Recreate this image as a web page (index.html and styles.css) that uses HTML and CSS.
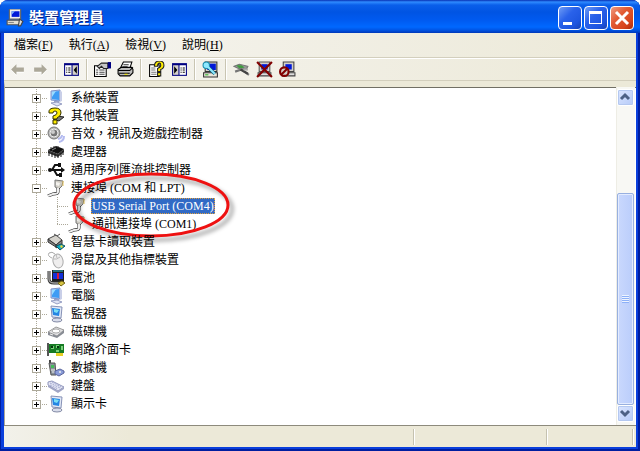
FILE: index.html
```html
<!DOCTYPE html>
<html lang="zh-Hant">
<head>
  <meta charset="UTF-8">
  <meta name="viewport" content="width=device-width, initial-scale=1.0">
  <title>裝置管理員</title>
  <link rel="stylesheet" href="styles.css">
</head>
<body>
  <!-- icon shapes, used below by id -->
  <svg class="sprite" aria-hidden="true">
    <symbol id="i-pc" viewBox="0 0 16 16">
      <path d="M3 0h10v9H3z" fill="#eee" stroke="#666" stroke-width="1"/>
      <path d="M5 2h7v5H5z" fill="#0018d8"/>
      <path d="M5 2h3l-3 3z" fill="#7ab0ff"/>
      <path d="M1 10h12v4H1z" fill="#e4e0d4" stroke="#555"/>
      <path d="M2 12h5" stroke="#888"/>
      <path d="M12 9l3 2-2 4h-2z" fill="#ddd" stroke="#444"/>
    </symbol>
    <symbol id="i-monitor" viewBox="0 0 18 18">
      <path d="M4 2l9-1v11l-9-1z" fill="#a9c9f5" stroke="#7f93c8"/>
      <path d="M5 3l7-1v9l-7-1z" fill="#3e9cf4"/>
      <path d="M5 3l4-1-4 6z" fill="#9bdcff"/>
      <path d="M13 1l2 2v9l-2 1z" fill="#c9cfe8"/>
      <path d="M7 12h5v2H7z" fill="#9aa2c8"/>
      <path d="M4 14l6-1 5 2-5 2z" fill="#dfe3f4" stroke="#98a0c4"/>
    </symbol>
    <symbol id="i-screen" viewBox="0 0 18 18">
      <path d="M4 1l11 1-1 11-9-1z" fill="#e2e8f6" stroke="#8792b6"/>
      <path d="M5 3l8 1-1 7-6-1z" fill="#2486e4"/>
      <path d="M7 4l5 1-2 3-3-1z" fill="#7be0f4"/>
      <path d="M8 12h3v2H8z" fill="#8892b4"/>
      <ellipse cx="10" cy="15" rx="5" ry="2" fill="#d9ddeb" stroke="#848ba6"/>
    </symbol>
    <symbol id="i-question" viewBox="0 0 18 18">
      <path d="M10 9l7 1-5 4-6-2z" fill="#777" stroke="#222"/>
      <path d="M2 6q-1-5 6-5q6 0 6 5q0 3-4 5v1H6V9q4-1 4-3q0-2-2-2q-2 0-2 2zM6 13h4v4H6z" fill="#ffee00" stroke="#332f00"/>
    </symbol>
    <symbol id="i-sound" viewBox="0 0 18 18">
      <circle cx="7" cy="8" r="6" fill="#b5b5b5" stroke="#777"/>
      <circle cx="7" cy="8" r="4" fill="#777" stroke="#eee"/>
      <circle cx="6" cy="7" r="2" fill="#ccc"/>
      <path d="M11 14q4-1 4-4M12 17q5-1 5-6" fill="none" stroke="#b4bbf0" stroke-width="2"/>
    </symbol>
    <symbol id="i-chip" viewBox="0 0 18 18">
      <path d="M1 7l8-4 8 3-6 5z" fill="#111"/>
      <path d="M1 7v3l10 4 6-5V6l-6 5z" fill="#333"/>
      <path d="M2 9v4M5 10v4M8 11v4M11 12v3M14 10v4M16 8v4" stroke="#111"/>
      <path d="M4 4v2M7 3v2M11 3v2" stroke="#333"/>
      <path d="M5 7l4-2" stroke="#888"/>
    </symbol>
    <symbol id="i-usb" viewBox="0 0 18 18">
      <path d="M2 9h14M5 9l3-5h4M7 9l3 5h3" fill="none" stroke="#111" stroke-width="2"/>
      <circle cx="3" cy="9" r="2" fill="#111"/>
      <path d="M14 6l4 3-4 3z" fill="#111"/>
      <path d="M11 2h3v4h-3zM12 12h3v4h-3z" fill="#111"/>
    </symbol>
    <symbol id="i-plug" viewBox="0 0 18 18">
      <path d="M8 1l8 1-1 5-3 3-4-2z" fill="#cfccc4" stroke="#777"/>
      <path d="M9 3l4 1-1 3-3-1z" fill="#f4f2ee"/>
      <path d="M16 2v5" stroke="#ebc75a"/>
      <path d="M11 9v4q0 2-5 2l-5 2" fill="none" stroke="#222" stroke-width="3"/>
      <path d="M11 9v4q0 2-5 2l-5 2" fill="none" stroke="#eee" stroke-width="2"/>
    </symbol>
    <symbol id="i-card" viewBox="0 0 18 18">
      <path d="M1 6l8-4 6 5-6 5z" fill="#d5d3cd" stroke="#444"/>
      <path d="M1 6v3l8 5v-2zM9 12l6-5v4l-6 4z" fill="#888" stroke="#333"/>
      <path d="M7 1l3 2 3-2" fill="none" stroke="#555"/>
      <path d="M9 13l5-2 4 2-5 4z" fill="#0eabc0" stroke="#164f5c"/>
      <path d="M14 12l2 1-1 2-2-1z" fill="#f2d738"/>
    </symbol>
    <symbol id="i-mouse" viewBox="0 0 18 18">
      <path d="M5 7Q0 5 2 2q3-2 6 1" fill="none" stroke="#aaa"/>
      <ellipse cx="11" cy="10" rx="5" ry="7" fill="#efeeee" stroke="#aaa" transform="rotate(-12 11 10)"/>
      <path d="M6 8q4 1 7-2M9 3l1 4" fill="none" stroke="#bbb"/>
    </symbol>
    <symbol id="i-battery" viewBox="0 0 18 18">
      <path d="M5 1h12v13H5z" fill="#202020"/>
      <path d="M6 4h10v6H6z" fill="#1230d8"/>
      <path d="M10 4h2v6h-2z" fill="#d31d3a"/>
      <path d="M6 2h10" stroke="#2bc4dc"/>
      <path d="M2 2v8q0 4 5 4h6" fill="none" stroke="#333" stroke-width="3"/>
      <path d="M2 2v8q0 4 5 4h6" fill="none" stroke="#ccc"/>
      <path d="M11 14l4-2 3 2-4 3z" fill="#d6c443" stroke="#776919"/>
    </symbol>
    <symbol id="i-disk" viewBox="0 0 18 18">
      <path d="M1 9l8-5 8 3-7 6z" fill="#e3e3e5" stroke="#999"/>
      <path d="M1 9v3l9 3 7-5V7l-7 6z" fill="#888c94"/>
      <ellipse cx="9" cy="8" rx="4" ry="2" fill="#fff" stroke="#aaa"/>
      <path d="M3 11l3 1" stroke="#eee"/>
    </symbol>
    <symbol id="i-nic" viewBox="0 0 18 18">
      <path d="M1 3h16v9H1z" fill="#167a24"/>
      <path d="M1 2v13" stroke="#555" stroke-width="2"/>
      <path d="M4 5h3v3H4zM9 4h3v3H9zM14 5h2v4h-2zM9 9h3v2H9z" fill="#79d07a"/>
      <path d="M4 5h2v2H4zM10 5h2v2h-2z" fill="#06330e"/>
      <path d="M9 12h7v3H9z" fill="#e8cf24"/>
    </symbol>
    <symbol id="i-modem" viewBox="0 0 18 18">
      <path d="M3 1v4" stroke="#444" stroke-width="2"/>
      <path d="M2 4h6l1 12H4z" fill="#8b949c" stroke="#555"/>
      <path d="M4 6h3v3H4z" fill="#43bd59"/>
      <path d="M4 11h4M5 13h4" stroke="#eee"/>
      <path d="M8 12l5-2 4 2v2l-5 3-4-2z" fill="#8a9cd8" stroke="#5b659c"/>
      <circle cx="13" cy="13" r="1" fill="#eee"/>
    </symbol>
    <symbol id="i-keyboard" viewBox="0 0 18 18">
      <path d="M1 5l4-1 12 6-6 4L1 8z" fill="#e3e5f4" stroke="#9096bc"/>
      <path d="M3 6l10 5M5 5l9 5M3 8l8 4" stroke="#a3aacf" stroke-dasharray="2 1"/>
      <path d="M11 14l6-4v2l-6 4L1 10V8z" fill="#a0a5c5"/>
    </symbol>

    <symbol id="t-back" viewBox="0 0 16 16">
      <path d="M2 9l5-5v3h7v4H7v3z" fill="#fff"/>
      <path d="M2 8l5-5v3h7v4H7v3z" fill="#aca899"/>
    </symbol>
    <symbol id="t-next" viewBox="0 0 16 16">
      <path d="M14 9L9 4v3H2v4h7v3z" fill="#fff"/>
      <path d="M14 8L9 3v3H2v4h7v3z" fill="#aca899"/>
    </symbol>
    <symbol id="t-tree" viewBox="0 0 16 16">
      <path d="M1 2h14v12H1z" fill="#000080"/>
      <path d="M2 4h6v9H2z" fill="#fff"/>
      <path d="M9 4h5v9H9z" fill="#d4d0c8"/>
      <path d="M3 6h1v1H3zM5 6h2v1H5zM3 8h1v1H3zM5 8h2v1H5zM3 10h1v1H3zM5 10h2v1H5zM13 5v7l-3-3.500z" fill="#000"/>
    </symbol>
    <symbol id="t-pane" viewBox="0 0 16 16">
      <path d="M1 2h14v12H1z" fill="#000080"/>
      <path d="M8 4h6v9H8z" fill="#fff"/>
      <path d="M2 4h5v9H2z" fill="#d4d0c8"/>
      <path d="M9 6h1v1H9zM11 6h2v1h-2zM9 8h1v1H9zM11 8h2v1h-2zM9 10h1v1H9zM11 10h2v1h-2zM3 5v7l3-3.500z" fill="#000"/>
    </symbol>
    <symbol id="t-props" viewBox="0 0 16 16">
      <path d="M.5 4.500h11v10H.5z" fill="#fff" stroke="#000"/>
      <path d="M2 8.500h2M5 8.500h5M2 10.500h2M5 10.500h5M2 12.500h2M5 12.500h5" stroke="#444"/>
      <path d="M3 5l4-3h6v5H9L7 5 5 7z" fill="#c5c5c5" stroke="#222"/>
      <path d="M13 1h3v6h-3z" fill="#000080"/>
    </symbol>
    <symbol id="t-print" viewBox="0 0 16 16">
      <path d="M6 1h8l-2 6H3z" fill="#fff" stroke="#000"/>
      <path d="M6 3.500h5M5 5.500h5" stroke="#333"/>
      <path d="M1 8l3-2h10l1 2v3l-3 3H3l-2-2z" fill="#bbb" stroke="#000"/>
      <path d="M1 9h11l3-3M2 11.500h10" fill="none" stroke="#000"/>
      <path d="M7 12h3v1H7z" fill="#f2e600"/>
    </symbol>
    <symbol id="t-help" viewBox="0 0 16 16">
      <path d="M1.500 3.500h9v11h-9z" fill="#fff" stroke="#000"/>
      <path d="M3 6.500h4M3 8.500h4M3 10.500h5M3 12.500h5" stroke="#777"/>
      <path d="M6 5q0-5 5-5q4 0 4 4q0 3-3 4v2H9V7q3-1 3-3q0-2-1-2q-2 0-2 3zM9 11h3v3H9z" fill="#ffee00" stroke="#222"/>
    </symbol>
    <symbol id="t-scan" viewBox="0 0 16 16">
      <path d="M3 1h11v9H3z" fill="#d4d0c8" stroke="#333"/>
      <path d="M5 2.500h8v6H5z" fill="#0018d8"/>
      <path d="M1.500 11h13v4h-13z" fill="#e9e6da" stroke="#333"/>
      <path d="M3 13h3" stroke="#29b529"/>
      <path d="M5 5l7 7" stroke="#055a78" stroke-width="3"/>
      <circle cx="4" cy="4" r="3" fill="#8feaff" stroke="#178cae"/>
      <path d="M5 5l7 7" stroke="#8feaff" stroke-width="2"/>
    </symbol>
    <symbol id="t-update" viewBox="0 0 16 16">
      <path d="M1 5l5-2 8 2-1 2-6 1z" fill="#999" stroke="#777"/>
      <path d="M3 4l5 0 3 2-5 1z" fill="#3f9b3f"/>
      <path d="M2 10l6-2 7 5" fill="none" stroke="#777" stroke-width="2"/>
      <path d="M7 8l7 4" stroke="#444" stroke-width="2"/>
      <path d="M10 8h4" stroke="#aaa" stroke-width="2"/>
    </symbol>
    <symbol id="t-remove" viewBox="0 0 16 16">
      <path d="M3 1h10v9H3z" fill="#d4d0c8" stroke="#555"/>
      <path d="M5 3h6v5H5z" fill="#0018d8"/>
      <path d="M2 11h12v3H2z" fill="#ddd" stroke="#444"/>
      <path d="M1 1l14 14M15 1L1 15" stroke="#800000" stroke-width="2"/>
    </symbol>
    <symbol id="t-disable" viewBox="0 0 16 16">
      <path d="M4 1h10v9H4z" fill="#d4d0c8" stroke="#444"/>
      <path d="M6 3h6v5H6z" fill="#0018d8"/>
      <path d="M3 11h12v3H3z" fill="#ddd" stroke="#444"/>
      <circle cx="5" cy="10" r="4" fill="#d4d0c8" stroke="#800000" stroke-width="2"/>
      <path d="M2 13l6-6" stroke="#800000" stroke-width="2"/>
    </symbol>
  </svg>

  <div class="window">
    <header class="titlebar">
      <svg class="app-icon"><use href="#i-pc"/></svg>
      <h1>裝置管理員</h1>
      <div class="controls">
        <button class="ctl" aria-label="最小化"><svg viewBox="0 0 22 22"><path d="M4 15h9v3H4z" fill="#fff"/></svg></button>
        <button class="ctl" aria-label="最大化"><svg viewBox="0 0 22 22"><path d="M4 4h13v13H4zM5 7v9h11V7z" fill="#fff" fill-rule="evenodd"/></svg></button>
        <button class="ctl close" aria-label="關閉"><svg viewBox="0 0 22 22"><path d="M5 5l12 12M17 5L5 17" stroke="#fff" stroke-width="3"/></svg></button>
      </div>
    </header>

    <nav class="menubar">
      <button>檔案(<u>F</u>)</button>
      <button>執行(<u>A</u>)</button>
      <button>檢視(<u>V</u>)</button>
      <button>說明(<u>H</u>)</button>
    </nav>

    <div class="toolbar">
      <button aria-label="上一頁" disabled><svg><use href="#t-back"/></svg></button>
      <button aria-label="下一頁" disabled><svg><use href="#t-next"/></svg></button>
      <span class="sep"></span>
      <button aria-label="顯示主控台樹狀目錄"><svg><use href="#t-tree"/></svg></button>
      <span class="sep"></span>
      <button aria-label="內容"><svg><use href="#t-props"/></svg></button>
      <button aria-label="列印"><svg><use href="#t-print"/></svg></button>
      <span class="sep"></span>
      <button aria-label="說明"><svg><use href="#t-help"/></svg></button>
      <button aria-label="動作窗格"><svg><use href="#t-pane"/></svg></button>
      <span class="sep"></span>
      <button aria-label="掃描硬體變更"><svg><use href="#t-scan"/></svg></button>
      <span class="sep"></span>
      <button aria-label="更新驅動程式"><svg><use href="#t-update"/></svg></button>
      <button aria-label="解除安裝"><svg><use href="#t-remove"/></svg></button>
      <button aria-label="停用"><svg><use href="#t-disable"/></svg></button>
    </div>

    <main class="content">
      <ul class="tree">
        <li><div class="row"><button class="toggle plus" aria-label="展開"></button><svg><use href="#i-monitor"/></svg><span>系統裝置</span></div></li>
        <li><div class="row"><button class="toggle plus" aria-label="展開"></button><svg><use href="#i-question"/></svg><span>其他裝置</span></div></li>
        <li><div class="row"><button class="toggle plus" aria-label="展開"></button><svg><use href="#i-sound"/></svg><span>音效，視訊及遊戲控制器</span></div></li>
        <li><div class="row"><button class="toggle plus" aria-label="展開"></button><svg><use href="#i-chip"/></svg><span>處理器</span></div></li>
        <li><div class="row"><button class="toggle plus" aria-label="展開"></button><svg><use href="#i-usb"/></svg><span>通用序列匯流排控制器</span></div></li>
        <li class="ports">
          <div class="row"><button class="toggle" aria-label="摺疊"></button><svg><use href="#i-plug"/></svg><span>連接埠 (COM 和 LPT)</span></div>
          <ul>
            <li class="row"><svg><use href="#i-plug"/></svg><span class="selected">USB Serial Port (COM4)</span></li>
            <li class="row"><svg><use href="#i-plug"/></svg><span>通訊連接埠 (COM1)</span></li>
          </ul>
          <svg class="marker" viewBox="0 0 166 76"><ellipse cx="81" cy="36" rx="77" ry="31"/></svg>
        </li>
        <li><div class="row"><button class="toggle plus" aria-label="展開"></button><svg><use href="#i-card"/></svg><span>智慧卡讀取裝置</span></div></li>
        <li><div class="row"><button class="toggle plus" aria-label="展開"></button><svg><use href="#i-mouse"/></svg><span>滑鼠及其他指標裝置</span></div></li>
        <li><div class="row"><button class="toggle plus" aria-label="展開"></button><svg><use href="#i-battery"/></svg><span>電池</span></div></li>
        <li><div class="row"><button class="toggle plus" aria-label="展開"></button><svg><use href="#i-monitor"/></svg><span>電腦</span></div></li>
        <li><div class="row"><button class="toggle plus" aria-label="展開"></button><svg><use href="#i-screen"/></svg><span>監視器</span></div></li>
        <li><div class="row"><button class="toggle plus" aria-label="展開"></button><svg><use href="#i-disk"/></svg><span>磁碟機</span></div></li>
        <li><div class="row"><button class="toggle plus" aria-label="展開"></button><svg><use href="#i-nic"/></svg><span>網路介面卡</span></div></li>
        <li><div class="row"><button class="toggle plus" aria-label="展開"></button><svg><use href="#i-modem"/></svg><span>數據機</span></div></li>
        <li><div class="row"><button class="toggle plus" aria-label="展開"></button><svg><use href="#i-keyboard"/></svg><span>鍵盤</span></div></li>
        <li><div class="row"><button class="toggle plus" aria-label="展開"></button><svg><use href="#i-screen"/></svg><span>顯示卡</span></div></li>
      </ul>
      <div class="scrollbar">
        <button aria-label="向上捲動"><svg viewBox="0 0 15 15"><path d="M3 9l4-4 4 4"/></svg></button>
        <div class="track"><div class="thumb"></div></div>
        <button aria-label="向下捲動"><svg viewBox="0 0 15 15"><path d="M3 5l4 4 4-4"/></svg></button>
      </div>
    </main>

    <footer class="statusbar">
      <span></span>
      <span></span>
      <span></span>
    </footer>
  </div>
</body>
</html>
```

FILE: styles.css
```css
* {
  box-sizing: border-box;
}

body {
  margin: 0;
  font-family: "Liberation Serif", "Noto Sans CJK TC", serif;
  font-size: 12px;
  color: #000;
  background: #fff;
}

button {
  padding: 0;
  border: none;
  background: none;
  font: inherit;
  color: inherit;
}

ul {
  margin: 0;
  padding: 0;
  list-style: none;
}

.sprite {
  display: none;
}

.window {
  display: flex;
  flex-direction: column;
  min-height: 100vh;
  padding: 0 4px 4px;
  background: #0a3fdc;
  border-radius: 8px 8px 0 0;
  box-shadow: inset 1px -2px #001ea0, inset -2px 0 #001ea0;
}

/* title bar */
.titlebar {
  display: flex;
  align-items: center;
  gap: 5px;
  height: 33px;
  margin: 0 -4px;
  padding: 3px 6px 0 6px;
  border-radius: 8px 8px 0 0;
  background: linear-gradient(#0831b4 0, #2f8bff 2px, #0a5fea 5px, #0054e3 12px, #005af0 20px, #0068ff 27px, #0055e5 30px, #0038b8 33px);
}

.app-icon {
  width: 18px;
  height: 18px;
}

.titlebar h1 {
  flex: 1;
  margin: 0;
  font-size: 15px;
  line-height: 20px;
  color: #fff;
  text-shadow: 1px 1px #0a1f7c;
}

.controls {
  display: flex;
  gap: 2px;
}

.ctl {
  width: 24px;
  height: 24px;
  border: 1px solid #fff;
  border-radius: 4px;
  background: linear-gradient(135deg, #6f9cf5, #2a62ea 40%, #1e56e0 75%, #1642b4);
}

.ctl svg {
  display: block;
  width: 22px;
  height: 22px;
}

.ctl.close {
  background: linear-gradient(135deg, #f09a80, #e25a33 40%, #d8451d 75%, #a82d0c);
}

/* menu and toolbar */
.menubar {
  display: flex;
  gap: 16px;
  height: 25px;
  padding: 0 10px;
  background: linear-gradient(90deg, #f6f5f1, #ece9d8);
  border-bottom: 1px solid #d3cfbd;
}

.menubar button {
  line-height: 24px;
}

.toolbar {
  display: flex;
  align-items: center;
  height: 23px;
  padding: 0 2px;
  background: linear-gradient(90deg, #f6f5f1, #ece9d8);
  border-top: 1px solid #fff;
  border-bottom: 1px solid #d3cfbd;
}

.toolbar button {
  width: 23px;
  height: 18px;
}

.toolbar svg {
  display: block;
  width: 17px;
  height: 17px;
  margin: 0 auto;
}

.sep {
  width: 2px;
  height: 21px;
  margin: 0 3px;
  background: #c9c5b2;
  border-right: 1px solid #fff;
}

/* device tree */
.content {
  flex: 1;
  display: flex;
  padding-right: 1px;
  background: #fff;
  border-top: 6px solid #ece9d8;
  border-left: 1px solid #aca899;
  box-shadow: inset 0 1px #716f64;
}

.tree {
  flex: 1;
  padding: 2px 0 0 27px;
}

.tree > li {
  position: relative;
  background: repeating-linear-gradient(#aca899 0 1px, transparent 1px 2px) 4px 0 / 1px 100% no-repeat;
}

.tree > li:last-child {
  background-size: 1px 9px;
}

.row {
  display: flex;
  align-items: center;
  height: 18px;
  line-height: 16px;
  white-space: nowrap;
}

.row svg {
  width: 18px;
  height: 18px;
  margin-right: 5px;
}

.row span {
  padding: 0 1px;
}

.toggle {
  width: 9px;
  height: 9px;
  margin-right: 6px;
  border: 1px solid #aca899;
  background: linear-gradient(#000, #000) center / 5px 1px no-repeat, #fff;
}

.toggle.plus {
  background: linear-gradient(#000, #000) center / 5px 1px no-repeat, linear-gradient(#000, #000) center / 1px 5px no-repeat, #fff;
}

.tree div.row {
  background: repeating-linear-gradient(90deg, #aca899 0 1px, transparent 1px 2px) 10px 9px / 6px 1px no-repeat;
}

.ports ul {
  padding-left: 25px;
  background: repeating-linear-gradient(#aca899 0 1px, transparent 1px 2px) 25px 0 / 1px 27px no-repeat;
}

.ports ul .row {
  padding-left: 11px;
  background: repeating-linear-gradient(90deg, #aca899 0 1px, transparent 1px 2px) 0 9px / 11px 1px no-repeat;
}

.row .selected {
  color: #fff;
  background: #316ac5;
  outline: 1px dotted #e0a040;
  outline-offset: -1px;
}

/* red ring drawn over the port entries */
.marker {
  position: absolute;
  top: -10px;
  left: 38px;
  width: 166px;
  height: 76px;
  fill: none;
  stroke: #ee1111;
  stroke-width: 3;
  overflow: visible;
  pointer-events: none;
  filter: drop-shadow(4px 4px 2px rgba(0, 0, 0, 0.4));
}

/* scrollbar */
.scrollbar {
  display: flex;
  flex-direction: column;
  width: 19px;
  padding: 2px 1px 3px 0;
  background: #f8f8f4;
  border-left: 1px solid #eeede5;
}

.scrollbar button {
  height: 17px;
  border: 1px solid #fff;
  border-radius: 2px;
  background: linear-gradient(135deg, #dce6ff, #b6cbf8);
  box-shadow: inset 0 0 0 1px #b4c8f0;
}

.scrollbar svg {
  display: block;
  width: 15px;
  height: 15px;
  fill: none;
  stroke: #4d6185;
  stroke-width: 3;
}

.track {
  flex: 1;
  display: flex;
  flex-direction: column;
  justify-content: flex-end;
}

.thumb {
  height: 71%;
  border: 1px solid #98b0e0;
  border-radius: 2px;
  background:
    repeating-linear-gradient(#eef4ff 0 1px, #8cb0f8 1px 2px) center / 7px 8px no-repeat,
    linear-gradient(90deg, #c9d8fd, #bacdfb);
  box-shadow: inset 0 0 0 1px #e4ecff;
}

/* status bar */
.statusbar {
  display: flex;
  height: 22px;
  padding: 3px 2px 2px 0;
  background: linear-gradient(90deg, #f2f1ea, #ece9d8 20%);
  border-top: 1px solid #8d8a7c;
}

.statusbar span {
  width: 133px;
  border-right: 1px solid #fff;
  box-shadow: inset -1px 0 #c5c2b0;
}

.statusbar span:first-child {
  flex: 1;
}

.statusbar span:last-child {
  width: 86px;
}
```
